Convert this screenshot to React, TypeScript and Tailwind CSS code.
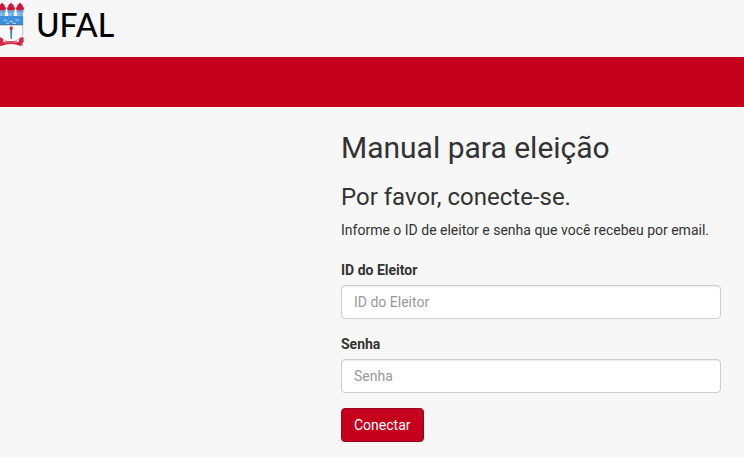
import type { InputHTMLAttributes } from "react";

function Crest() {
  return (
    <svg width="24" height="48" viewBox="0 0 24 48" aria-hidden="true">
      {[-1, 8, 17].map((x) => (
        <g key={x} transform={`translate(${x} 0)`}>
          <path d="M3 2.5Q4 4.4 5.8 5.2L5.6 6.6 7.2 8 6.2 10.6H-.2L-1.2 8 .4 6.6.2 5.2Q2 4.4 3 2.5Z" fill="#d2143a" />
          <path d="M-.8 10.8H6.8L5.8 13.4V17H.2V13.4Z" fill="#6db0e8" />
          <path d="M-.4 10.9H6.4" stroke="#4a7fb5" strokeWidth=".7" />
          <path d="M2 13V16.5" stroke="#b5d8f5" strokeWidth=".9" />
        </g>
      ))}
      <path d="M-1 16.5H22.8V34Q21.5 39.5 11 42.5Q1 40 -1 35Z" fill="#fcfcfc" stroke="#a9b3bc" strokeWidth=".8" />
      <path d="M-1 16H23V25H-1Z" fill="#3f90db" />
      <path d="M3.5 20.2H7M9.5 21.4H13M15.5 20.2H19M6.5 23.2H9M12.5 23.4H16" stroke="#c3e0f7" strokeWidth=".9" />
      <path d="M-1 24.8H23" stroke="#41627f" strokeWidth=".8" />
      <path d="M10.1 29.5H12.3L11.9 39H10.5Z" fill="#4186c3" />
      <ellipse cx="11.2" cy="28.2" rx="1.6" ry="2" fill="#d02a4a" />
      <path d="M-1 37.2 2.5 38.3 3.5 41.5 1 45.8-1 46ZM23.6 37.2 19.8 37.8 18.6 41.5 20.5 44.5 22.8 46.2 22.2 43.3 23.6 42Z" fill="#d42745" />
      <path d="M0 43.2Q11 38.8 22 43.2L20.6 46Q11 42.2 1.4 46Z" fill="#d42745" />
      <path d="M5 43Q11 41.6 17.5 43" fill="none" stroke="#f1a9b6" strokeWidth=".7" strokeDasharray="1.5 1" />
    </svg>
  );
}

function Field({ id, label, ...rest }: { id: string; label: string } & InputHTMLAttributes<HTMLInputElement>) {
  return (
    <div className="mb-[15px]">
      <label htmlFor={id} className="mb-[5px] block font-bold">
        {label}
      </label>
      <input
        id={id}
        placeholder={label}
        className="block h-[34px] w-full rounded border border-[#ccc] bg-white px-3 py-1.5 text-[#555] shadow-[inset_0_1px_1px_rgba(0,0,0,0.075)] outline-none placeholder:text-[#999] focus:border-[#c4001d]"
        {...rest}
      />
    </div>
  );
}

export default function App() {
  return (
    <div className="min-h-screen bg-[#f7f7f7] font-[Roboto,sans-serif] text-sm leading-5 text-[#333]">
      <header className="flex h-[57px] items-start gap-3">
        <Crest />
        <span className="pt-1 font-['Lato',sans-serif] text-[32px] leading-[42px] font-medium text-black">UFAL</span>
      </header>
      <nav className="h-[50px] bg-[#c4001d]" />
      <main className="flex justify-end pt-6 pr-[23px] pb-[15px]">
        <form className="w-[380px] max-w-full" onSubmit={(e) => e.preventDefault()}>
          <h1 className="mb-5 text-[30px] leading-[33px]">Manual para eleição</h1>
          <h2 className="mb-2.5 text-2xl leading-[26px]">Por favor, conecte-se.</h2>
          <p className="mb-5">Informe o ID de eleitor e senha que você recebeu por email.</p>
          <Field id="voter" label="ID do Eleitor" type="text" />
          <Field id="password" label="Senha" type="password" />
          <button
            type="submit"
            className="h-[34px] rounded border border-[#99001f] bg-[#c4001d] px-3 text-white"
          >
            Conectar
          </button>
        </form>
      </main>
    </div>
  );
}
